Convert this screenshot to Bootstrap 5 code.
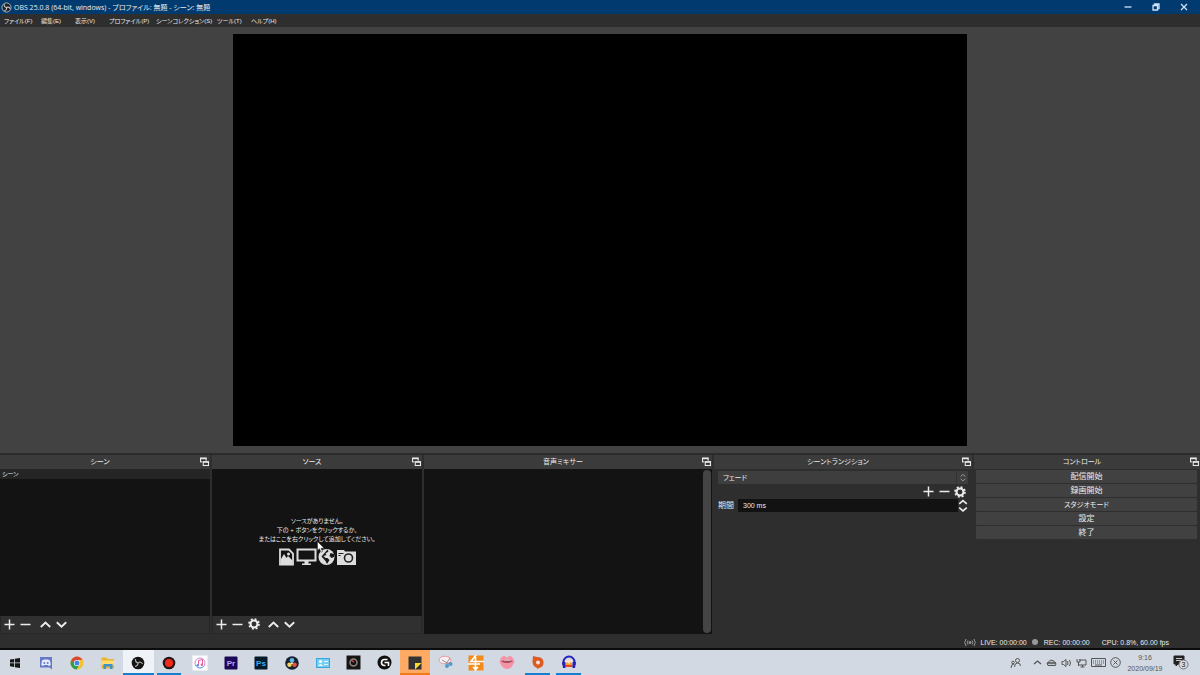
<!DOCTYPE html>
<html lang="ja">
<head>
<meta charset="utf-8">
<meta name="viewport" content="width=device-width, initial-scale=1">
<title>OBS 25.0.8</title>
<link href="https://cdn.jsdelivr.net/npm/bootstrap@5.3.0/dist/css/bootstrap.min.css" rel="stylesheet">
<script src="https://cdn.jsdelivr.net/npm/bootstrap@5.3.0/dist/js/bootstrap.bundle.min.js"></script>
<style>
  body { background: #2e2e2e; color: #ececec; font-family: "Liberation Sans", "Noto Sans CJK JP", sans-serif; font-size: 7px; line-height: 9px; font-feature-settings: "palt"; }
  button, input, select { font: inherit; font-feature-settings: inherit; color: inherit; border: 0; padding: 0; background: none; border-radius: 0; }
  svg { display: block; flex: none; }
  .line-art { fill: none; stroke: currentColor; }
  .titlebar { height: 14px; background: #003a6e; font-family: "Open Sans", "Noto Sans CJK JP", sans-serif; padding: 0 2px 0 1px; gap: 2px; }
  .winbtn { width: 28px; height: 14px; display: grid; place-items: center; }
  .menubar { height: 13px; background: #2e2e2e; padding: 1px 0 0 4px; display: grid; grid-template-columns: 37px 34px 34px 47px 61px 34px 40px; align-items: center; }
  .menubar a { color: inherit; text-decoration: none; white-space: nowrap; font-size: 6px; }
  .preview { background: #424242; padding: 7px; border-bottom: 2px solid #2b2b2b; min-height: 0; }
  .stage { background: #000; height: 100%; aspect-ratio: 734 / 412; }
  .docks { display: grid; grid-template-columns: 210fr 210fr 288fr 258fr 226fr; gap: 2px; height: 179px; }
  .dock { min-width: 0; }
  .dock-head { height: 14px; background: #3b3b3b; padding: 0 1px 1px 0; }
  .dock-head h2 { font-size: inherit; line-height: inherit; font-weight: 400; margin: 0; text-align: center; }
  .well { background: #131313; min-height: 0; }
  .scene-row { background: #252525; height: 10px; padding-left: 2px; font-size: 6px; line-height: 10px; }
  .tools { height: 18px; background: #303030; border: 1px solid #272727; border-top: 0; padding-left: 3px; }
  .tool { width: 16px; height: 16px; display: grid; place-items: center start; }
  .tools-end .tool { height: 15px; place-items: center; }
  .empty { padding-bottom: 2px; }
  .hint { line-height: 9px; font-size: 6px; text-align: center; margin: 0 0 4px; }
  .hint-icons, .ctls { gap: 1px; }
  .cursor { position: absolute; left: 105px; top: 72px; }
  .scrollbar { width: 8px; background: #454545; border-radius: 4px; margin: 1px; }
  .combo { height: 13px; background: #3e3e3e; margin-top: 2px; border-radius: 1px; }
  .combo select { appearance: none; padding-left: 5px; height: 12px; outline: 0; }
  .combo-arrow { width: 12px; height: 13px; border-left: 1px solid #333; display: grid; place-items: center; color: #999; }
  .spin { background: #121212; height: 13px; padding-left: 5px; min-width: 0; }
  .ctls { padding: 1px 3px 0 2px; }
  .ctl { height: 13px; background: #414141; text-align: center; line-height: 12px; border-radius: 1px; }
  .kanji { font-size: 8px; }
  .status { height: 14px; padding: 2px 31px 0 0; }
  .status .rec { margin: 0 12px 0 5px; }
  .taskbar { height: 27px; background: #d2d9e2; border-top: 2px solid #0c0c0c; color: #555; }
  .apps { width: 584px; }
  .app { flex: 1 1 0; display: grid; place-items: center; position: relative; }
  .app.running::after { content: ""; position: absolute; left: 3px; right: 3px; bottom: 0; height: 2px; background: #1580d0; }
  .app.current { background: #eff2f6; box-shadow: inset 0 -2px #1580d0; }
  .app.alert-on { background: #ffab66; box-shadow: inset 0 -2px #f57a16; }
  .tray { gap: 4px; padding-right: 11px; }
  .people { margin-right: 8px; }
  .clock { width: 36px; text-align: center; line-height: 11px; margin: 0 6px 0 2px; }
</style>
</head>
<body class="vh-100 d-flex flex-column overflow-hidden">

<svg width="0" height="0" class="position-absolute" aria-hidden="true">
  <symbol id="popout" viewBox="0 0 10 10"><path d="M0 .5h7.500v5.500H0z" fill="#e8e8e8"/><path d="M1.200 2.500h5v2.300h-5z" fill="#333"/><path d="M2.500 4H10v6H2.500z" fill="#3b3b3b"/><path d="M3 4.500h7V10H3z" fill="#e8e8e8"/><path d="M4.200 6.500h4.600v2.300H4.200z" fill="#333"/></symbol>
  <symbol id="plus" viewBox="0 0 11 11"><path d="M5.500 .5v10M.5 5.500h10" stroke-width="1.500"/></symbol>
  <symbol id="minus" viewBox="0 0 11 11"><path d="M.5 5.500h10" stroke-width="1.500"/></symbol>
  <symbol id="up" viewBox="0 0 11 11"><path d="M.8 8l4.700-4.500L10.200 8" stroke-width="1.900"/></symbol>
  <symbol id="down" viewBox="0 0 11 11"><path d="M.8 3.300l4.700 4.500 4.700-4.500" stroke-width="1.900"/></symbol>
  <symbol id="gear" viewBox="0 0 11 11"><circle cx="5.500" cy="5.500" r="3.200" stroke-width="1.900"/><circle cx="5.500" cy="5.500" r="4.600" stroke-width="1.500" stroke-dasharray="1.800 1.813"/></symbol>
  <symbol id="updown" viewBox="0 0 9 12"><path d="M1 4.500l3.500-3L8 4.500M1 8l3.500 3L8 8" stroke-width="1.500"/></symbol>
</svg>

<header class="titlebar d-flex align-items-center">
  <svg width="11" height="11" viewBox="0 0 12 12"><circle cx="6" cy="6" r="5" fill="#20242a" stroke="#b9bdc4"/><path d="M6 6C4 5.500 3 4 3.700 2.500M6 6c2-1 3.700 0 4 1.500M6 6c.5 2-.8 3.500-2.500 3.500" fill="none" stroke="#c5c9cf" stroke-width="1.200"/></svg>
  <span class="me-auto">OBS 25.0.8 (64-bit, windows) - プロファイル: 無題 - シーン: 無題</span>
  <div class="d-flex">
    <button class="winbtn" aria-label="最小化"><svg class="line-art" width="8" height="8" viewBox="0 0 8 8"><path d="M.5 4h7" stroke="#cfe3fa" stroke-width="1.300"/></svg></button>
    <button class="winbtn" aria-label="元に戻す"><svg class="line-art" width="8" height="8" viewBox="0 0 8 8"><path d="M1 2.500h4.500V7H1zM2.500 2.500V1H7v4.500H5.500" stroke="#cfe3fa" stroke-width="1.300"/></svg></button>
    <button class="winbtn" aria-label="閉じる"><svg class="line-art" width="8" height="8" viewBox="0 0 8 8"><path d="M1 1l6 6M7 1L1 7" stroke="#cfe3fa" stroke-width="1.300"/></svg></button>
  </div>
</header>

<nav class="menubar">
  <a href="#">ファイル(F)</a><a href="#">編集(E)</a><a href="#">表示(V)</a><a href="#">プロファイル(P)</a><a href="#">シーンコレクション(S)</a><a href="#">ツール(T)</a><a href="#">ヘルプ(H)</a>
</nav>

<main class="preview flex-grow-1 d-flex justify-content-center"><div class="stage"></div></main>

<section class="docks">
  <div class="dock d-flex flex-column">
    <div class="dock-head d-flex align-items-center"><h2 class="flex-grow-1">シーン</h2><button aria-label="切り離す"><svg width="9" height="9"><use href="#popout"/></svg></button></div>
    <div class="well flex-grow-1"><div class="scene-row">シーン</div></div>
    <div class="tools d-flex">
      <button class="tool" aria-label="追加"><svg class="line-art" width="11" height="11"><use href="#plus"/></svg></button>
      <button class="tool" aria-label="削除"><svg class="line-art" width="11" height="11"><use href="#minus"/></svg></button>
      <button class="tool ms-1" aria-label="上へ"><svg class="line-art" width="11" height="11"><use href="#up"/></svg></button>
      <button class="tool" aria-label="下へ"><svg class="line-art" width="11" height="11"><use href="#down"/></svg></button>
    </div>
  </div>

  <div class="dock d-flex flex-column">
    <div class="dock-head d-flex align-items-center"><h2 class="flex-grow-1">ソース</h2><button aria-label="切り離す"><svg width="9" height="9"><use href="#popout"/></svg></button></div>
    <div class="well empty flex-grow-1 position-relative d-flex flex-column align-items-center justify-content-center">
      <p class="hint">ソースがありません。<br>下の + ボタンをクリックするか、<br>またはここを右クリックして追加してください。</p>
      <div class="hint-icons d-flex align-items-center">
        <svg width="17" height="18" viewBox="0 0 17 18"><path d="M2 1.500h9l4 4v11H2z" fill="none" stroke="#ddd" stroke-width="1.800"/><path d="M3 14v-3l3-5 2.500 4 1.500-2 4 4v4H3z" fill="#ddd"/><circle cx="10.500" cy="6" r="1.500" fill="#ddd"/></svg>
        <svg width="21" height="18" viewBox="0 0 21 18"><path d="M1.500 1.500h18v11h-18z" fill="none" stroke="#ddd" stroke-width="2"/><path d="M8.500 13h4v2.500H15V17H6v-1.500h2.500z" fill="#ddd"/></svg>
        <svg width="17" height="18" viewBox="0 0 17 18"><circle cx="8.500" cy="9" r="8" fill="#ddd"/><path d="M9.500 1.500l1 2-3 2 1 1.500-3 1 2 2h2l2 2-2.500 4-1.500-3-4-4.500M12.500 5l3.500 1v3l-2.500 1-2-2z" fill="#181818"/></svg>
        <svg width="21" height="18" viewBox="0 0 21 18"><path d="M1 2h7l1 1.500h11V17H1z" fill="#ddd"/><path d="M2.500 5.500h5M2.500 7.500h2" stroke="#222"/><circle cx="12.500" cy="10" r="4" fill="#ddd" stroke="#222" stroke-width="1.600"/></svg>
      </div>
      <svg class="cursor" width="8" height="12" viewBox="0 0 8 12"><path d="M.5.500v9l2-1.800 1.500 3.500 1.500-.7L4 7.200h3.200z" fill="#fff" stroke="#222" stroke-width=".5"/></svg>
    </div>
    <div class="tools d-flex">
      <button class="tool" aria-label="追加"><svg class="line-art" width="11" height="11"><use href="#plus"/></svg></button>
      <button class="tool" aria-label="削除"><svg class="line-art" width="11" height="11"><use href="#minus"/></svg></button>
      <button class="tool" aria-label="設定"><svg class="line-art" width="12" height="12"><use href="#gear"/></svg></button>
      <button class="tool ms-1" aria-label="上へ"><svg class="line-art" width="11" height="11"><use href="#up"/></svg></button>
      <button class="tool" aria-label="下へ"><svg class="line-art" width="11" height="11"><use href="#down"/></svg></button>
    </div>
  </div>

  <div class="dock d-flex flex-column">
    <div class="dock-head d-flex align-items-center"><h2 class="flex-grow-1">音声ミキサー</h2><button aria-label="切り離す"><svg width="9" height="9"><use href="#popout"/></svg></button></div>
    <div class="well flex-grow-1 d-flex justify-content-end"><div class="scrollbar"></div></div>
  </div>

  <div class="dock">
    <div class="dock-head d-flex align-items-center"><h2 class="flex-grow-1">シーントランジション</h2><button aria-label="切り離す"><svg width="9" height="9"><use href="#popout"/></svg></button></div>
    <div class="px-1">
      <div class="combo d-flex"><select class="flex-grow-1" aria-label="シーントランジション"><option>フェード</option></select><span class="combo-arrow"><svg class="line-art" width="6" height="9"><use href="#updown"/></svg></span></div>
      <div class="tools-end d-flex justify-content-end">
        <button class="tool" aria-label="追加"><svg class="line-art" width="11" height="11"><use href="#plus"/></svg></button>
        <button class="tool" aria-label="削除"><svg class="line-art" width="11" height="11"><use href="#minus"/></svg></button>
        <button class="tool" aria-label="設定"><svg class="line-art" width="12" height="12"><use href="#gear"/></svg></button>
      </div>
      <div class="d-flex align-items-center">
        <label for="duration" class="kanji me-1">期間</label>
        <input id="duration" class="spin flex-grow-1" value="300 ms">
        <svg class="line-art" width="10" height="13"><use href="#updown"/></svg>
      </div>
    </div>
  </div>

  <div class="dock">
    <div class="dock-head d-flex align-items-center"><h2 class="flex-grow-1">コントロール</h2><button aria-label="切り離す"><svg width="9" height="9"><use href="#popout"/></svg></button></div>
    <div class="ctls d-grid">
      <button class="ctl kanji">配信開始</button>
      <button class="ctl kanji">録画開始</button>
      <button class="ctl">スタジオモード</button>
      <button class="ctl kanji">設定</button>
      <button class="ctl kanji">終了</button>
    </div>
  </div>
</section>

<div class="status d-flex align-items-center justify-content-end">
  <svg class="line-art me-1" width="12" height="9" viewBox="0 0 12 9"><g stroke="#999"><circle cx="6" cy="4.500" r="1" fill="#999"/><path d="M4 2.500q-1.500 2 0 4M8 2.500q1.500 2 0 4M2 1q-2.500 3.500 0 7M10 1q2.500 3.500 0 7"/></g></svg>
  <span>LIVE: 00:00:00</span>
  <svg class="ms-1" width="8" height="8" viewBox="0 0 8 8"><circle cx="4" cy="4" r="3" fill="#999"/></svg>
  <span class="rec">REC: 00:00:00</span>
  <span>CPU: 0.8%, 60.00 fps</span>
</div>

<footer class="taskbar d-flex justify-content-between">
  <div class="apps d-flex">
    <span class="app"><svg width="12" height="12" viewBox="0 0 12 12"><path fill="#161616" d="M1 2.500l4-.6v3.600H1zM5.800 1.800L11 1v4.500H5.800zM1 6.300h4v3.600l-4-.6zM5.800 6.300H11V11l-5.200-.8z"/></svg></span>
    <span class="app"><svg width="14" height="14" viewBox="0 0 14 14"><path d="M1 1h12v12.500L10.500 11.500H1z" fill="#6679c8"/><path d="M3 4.500l2-1h4l2 1 .8 4.500-2 1-1-1H5.200l-1 1-2-1z" fill="#e5e9fa"/><circle cx="5.300" cy="7" r="1" fill="#6679c8"/><circle cx="8.700" cy="7" r="1" fill="#6679c8"/></svg></span>
    <span class="app"><svg width="14" height="14" viewBox="0 0 14 14"><circle cx="7" cy="7" r="6.500" fill="#f6c12f"/><path d="M1.400 3.700A6.500 6.500 0 0 1 12.600 3.800L7 4 4 8.500z" fill="#dd4634"/><path d="M1.300 3.900A6.500 6.500 0 0 0 6.500 13.500L9 9 4.500 8.500z" fill="#2e9c54"/><circle cx="7" cy="7" r="3.100" fill="#fff"/><circle cx="7" cy="7" r="2.500" fill="#4285e8"/></svg></span>
    <span class="app"><svg width="14" height="14" viewBox="0 0 14 14"><path d="M.5 1.500h5l1 1.500h6.500v9.500H.5z" fill="#e9b52f"/><path d="M.5 4.500H13V9H.5z" fill="#ffdc70"/><path d="M2.500 8h9v5H9v-2.500H5V13H2.500z" fill="#3d91ce"/></svg></span>
    <span class="app current"><svg width="14" height="14" viewBox="0 0 14 14"><circle cx="7" cy="7" r="6.300" fill="#151515"/><path d="M7 7Q4 6 4.500 3M7 7q3-2 4.500 1M7 7q0 3-3 3.500" fill="none" stroke="#aaa" stroke-width="1.200"/></svg></span>
    <span class="app running"><svg width="14" height="14" viewBox="0 0 14 14"><circle cx="7" cy="7" r="6.300" fill="#201717"/><circle cx="7" cy="7" r="4" fill="#f32a1b"/></svg></span>
    <span class="app"><svg width="16" height="16" viewBox="0 0 16 16"><path d="M.5.500h15v15H.5z" fill="#fff"/><circle cx="8" cy="8" r="5" fill="#fff" stroke="#c887dc"/><path d="M3.500 10A5 5 0 0 0 12 11" fill="none" stroke="#57bce8"/><path d="M6.500 10V5.500l4-1V9.500" fill="none" stroke="#e85b91"/><circle cx="5.800" cy="10.300" r="1.200" fill="#5e8cee"/><circle cx="9.800" cy="9.700" r="1.200" fill="#e85b91"/></svg></span>
    <span class="app"><svg width="14" height="14" viewBox="0 0 14 14"><rect x=".5" y=".5" width="13" height="13" rx="1" fill="#1b0958"/><text x="7" y="10" text-anchor="middle" font-size="8" font-weight="700" fill="#c1a2ff">Pr</text></svg></span>
    <span class="app"><svg width="14" height="14" viewBox="0 0 14 14"><rect x=".5" y=".5" width="13" height="13" rx="1" fill="#041b2b"/><text x="7" y="10" text-anchor="middle" font-size="8" font-weight="700" fill="#3dabf5">Ps</text></svg></span>
    <span class="app"><svg width="14" height="14" viewBox="0 0 14 14"><circle cx="7" cy="7" r="6.800" fill="#152030"/><circle cx="7" cy="4.300" r="2.300" fill="#5cb9e9"/><circle cx="4.500" cy="8.800" r="2.300" fill="#edd65a"/><circle cx="9.500" cy="8.800" r="2.300" fill="#e65242"/><circle cx="7" cy="7.200" r=".9" fill="#fff"/></svg></span>
    <span class="app"><svg width="14" height="14" viewBox="0 0 14 14"><path d="M0 2h14v10H0z" fill="#3ca5df"/><path d="M1 3h12v8H1z" fill="#74cef5"/><circle cx="4.500" cy="5.500" r="1.600" fill="#fff"/><path d="M2 10q2.500-4 5 0zM8 5h4v1H8zM8 8h4v1H8z" fill="#e9faff"/></svg></span>
    <span class="app"><svg width="15" height="15" viewBox="0 0 15 15"><path d="M.5.500h14v14H.5z" fill="#171414"/><circle cx="7.500" cy="7.500" r="3.500" fill="none" stroke="#8b8584" stroke-width="1.500"/><path d="M5 5l3 2" stroke="#de4242" stroke-width="1.500"/></svg></span>
    <span class="app"><svg width="15" height="15" viewBox="0 0 15 15"><circle cx="7.500" cy="7.500" r="7" fill="#111"/><path d="M10.500 4.500H7.500a3 3 0 0 0 0 6h1M7.500 7.500h4V11" fill="none" stroke="#fff" stroke-width="1.600"/></svg></span>
    <span class="app alert-on"><svg width="14" height="14" viewBox="0 0 14 14"><path d="M.5.500h13v13H.5z" fill="#333"/><path d="M7 7h6.500L7 13.500z" fill="#ffda32"/></svg></span>
    <span class="app"><svg width="16" height="15" viewBox="0 0 16 15"><ellipse cx="7" cy="5" rx="6" ry="3.800" fill="#f7eff1" stroke="#e69a9c"/><path d="M4 5l7 4M12 3L8 9" stroke="#998d9b"/><circle cx="9" cy="11" r="2" fill="#4e9acc"/><circle cx="12.500" cy="9" r="2" fill="#4e9acc"/></svg></span>
    <span class="app"><svg width="16" height="16" viewBox="0 0 16 16"><path d="M.5.500h15v15H.5z" fill="#f38b1c"/><path d="M8 0L3 6.500h13M7.500 2v14M0 9h12M5 12l2.500 2.500L10 12" fill="none" stroke="#fff" stroke-width="1.700"/></svg></span>
    <span class="app"><svg width="16" height="15" viewBox="0 0 16 15"><path d="M.5 6.500Q2 1 5.500 1L8 2.500 10.500 1Q14 1 15.500 6.500 13 14 8 14T.5 6.500z" fill="#f393a5"/><path d="M2 6.500q6-4 12 0-6 3-12 0z" fill="#a94b65"/><path d="M4 5.500q4-2 8 0z" fill="#fff"/></svg></span>
    <span class="app running"><svg width="14" height="15" viewBox="0 0 14 15"><path d="M2 1l4 1q6 0 6.500 5T8 13l-2 1v-1Q1 11 1.500 6z" fill="#dd5b22"/><circle cx="7" cy="7.500" r="2" fill="#f8e4d9"/></svg></span>
    <span class="app running"><svg width="16" height="15" viewBox="0 0 16 15"><path d="M4.500 5h7v7h-7z" fill="#f7e3cf"/><path d="M2.500 10V7a5.500 5.500 0 0 1 11 0v3" fill="none" stroke="#2322bd" stroke-width="2"/><path d="M4.500 9l2-2 1.500 2 1.500-2 2 2v3h-7z" fill="#f5a127"/><path d="M4.500 10h7v2h-7z" fill="#ea4424"/><path d="M1 7h3.500v6H2zM11.500 7H15l-1 6h-2.500z" fill="#2322bd"/></svg></span>
  </div>
  <div class="tray d-flex align-items-center">
    <svg class="line-art people" width="11" height="12" viewBox="0 0 11 12"><circle cx="7.500" cy="3.500" r="2"/><path d="M4.500 10q0-4 3-4t3 3M1 11q0-4 3-4"/><circle cx="3" cy="5.500" r="1.300"/></svg>
    <svg class="line-art" width="9" height="9" viewBox="0 0 9 9"><path d="M1 6l3.500-3L8 6" stroke-width="1.300"/></svg>
    <svg class="line-art" width="11" height="9" viewBox="0 0 11 9"><path d="M2 7.500Q0 5.500 2.500 4 4 1 7 2.500 8 3 8.500 4 11 5 9.500 7.500z" fill="#bfc4ca"/><path d="M1 5h9" stroke-width="1.500"/></svg>
    <svg class="line-art" width="11" height="10" viewBox="0 0 11 10"><path d="M1 3.500h1.500L5 1.500v7l-2.500-2H1zM6.500 3q1 2 0 4M8.500 2q2 3 0 6"/></svg>
    <svg class="line-art" width="11" height="10" viewBox="0 0 11 10"><path d="M3 2h7v5H3M6.500 7v2M4.500 9h4M1 1v3h3V1M2.500 4v4"/></svg>
    <svg class="line-art" width="15" height="9" viewBox="0 0 15 9"><path d="M.5.500h14v8H.5z"/><path d="M2 3h11M2 5h11" stroke-dasharray="1 1"/><path d="M4 7h7"/></svg>
    <svg class="line-art" width="11" height="11" viewBox="0 0 11 11"><circle cx="5.500" cy="5.500" r="4.800"/><path d="M3.500 3.500l4 4M7.500 3.500l-4 4"/></svg>
    <div class="clock">9:16<br>2020/09/19</div>
    <svg width="16" height="15" viewBox="0 0 16 15"><path d="M1 1h10v8H5L3 11V9H1z" fill="#222" stroke="#222"/><path d="M3 3.500h6M3 5.500h6" stroke="#ccc"/><circle cx="10.500" cy="9.500" r="4.500" fill="#d6dae0" stroke="#777"/><text x="10.500" y="12" text-anchor="middle" font-size="7" fill="#222">3</text></svg>
  </div>
</footer>
</body>
</html>
